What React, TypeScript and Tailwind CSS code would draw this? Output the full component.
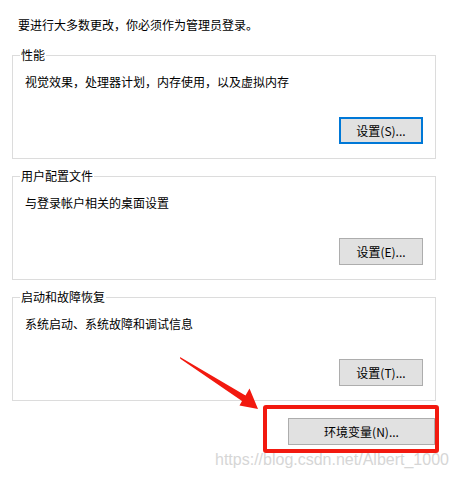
import React from 'react';

const GROUPS = [
    { title: '性能', desc: '视觉效果，处理器计划，内存使用，以及虚拟内存', button: '设置(S)...', focused: true },
    { title: '用户配置文件', desc: '与登录帐户相关的桌面设置', button: '设置(E)...', focused: false },
    { title: '启动和故障恢复', desc: '系统启动、系统故障和调试信息', button: '设置(T)...', focused: false },
];

const GroupBox: React.FC<{ title: string; desc: string; button: string; focused: boolean; first: boolean }> = ({ title, desc, button, focused, first }) => (
    <fieldset className={`border border-[#dcdcdc] ${first ? 'mt-[14px]' : 'mt-[9px]'}`}>
        <legend className="ml-[7px] px-[1px] leading-4">{title}</legend>
        <div className="px-[12px] pt-[11px] pb-[14px]">
            <p className="leading-4">{desc}</p>
            <div className="flex justify-end mt-[27px]">
                <button
                    className={`w-[84px] h-[27px] bg-[#e1e1e1] leading-4 ${focused ? 'border-2 border-[#0078d7]' : 'border border-[#adadad]'
                        }`}
                >
                    {button}
                </button>
            </div>
        </div>
    </fieldset>
);

export default function App() {
    return (
        <div className="relative w-[455px] h-[480px] overflow-hidden bg-white text-black text-[12px] font-['Noto_Sans_CJK_SC',sans-serif]">
            <div className="pl-[12px] pr-[19px] pt-[17px]">
                <p className="pl-[6px] leading-4">要进行大多数更改，你必须作为管理员登录。</p>

                {GROUPS.map((g, i) => (
                    <GroupBox key={g.title} {...g} first={i === 0} />
                ))}

                {/* red annotation box round the button */}
                <div className="flex justify-end mt-[4px] -mr-[3px]">
                    <div className="border-4 border-[#f2190f] rounded-[3px] pl-[21px] pt-[9px] pb-[4px]">
                        <button className="w-[147px] h-[27px] bg-[#e1e1e1] border border-[#adadad] leading-4">
                            环境变量(N)...
                        </button>
                    </div>
                </div>
            </div>

            {/* annotation arrow */}
            <svg className="absolute left-0 top-0 pointer-events-none" width="455" height="480" viewBox="0 0 455 480">
                <polygon
                    points="180,357 245.5,395.5 249.5,388.5 258,409 239.5,405.5 242,401 180.3,358.8"
                    fill="#f2190f"
                />
            </svg>

            {/* watermark */}
            <span className="absolute left-[215px] top-[451px] font-['Liberation_Sans',Arial,sans-serif] text-[16px] leading-[18px] text-[#d6d6d6] pointer-events-none">
                https://blog.csdn.net/Albert_1000
            </span>
        </div>
    );
}
